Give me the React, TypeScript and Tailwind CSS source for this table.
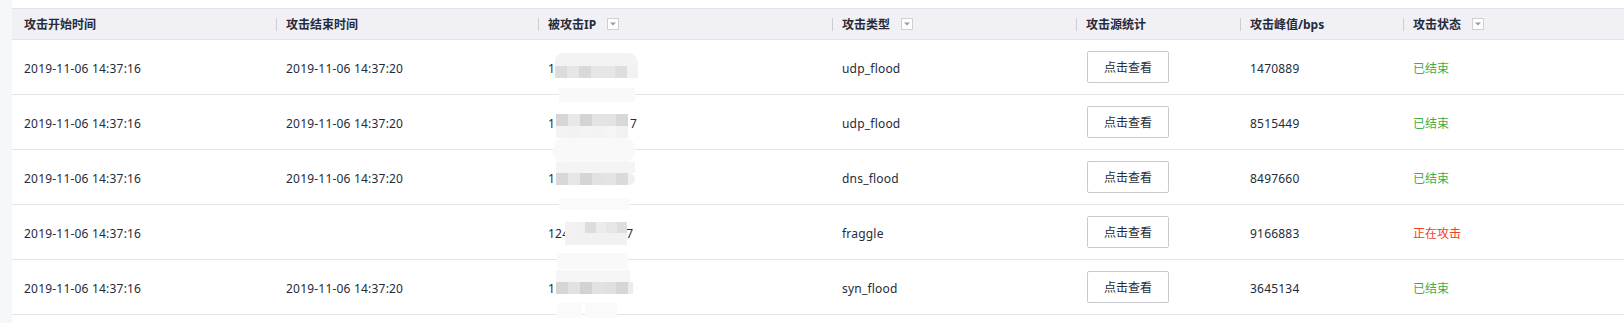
import React from "react";

type Rect = { x: number; y: number; w: number; h: number; c: string; r?: string };

const COLS = [264, 262, 294, 244, 164, 163, 221];
const IP_X = 538;

const HEAD = ["攻击开始时间", "攻击结束时间", "被攻击IP", "攻击类型", "攻击源统计", "攻击峰值/bps", "攻击状态"];
const HAS_FILTER = [false, false, true, true, false, false, true];

function cells(x0: number, y: number, h: number, colors: string[], w = 12): Rect[] {
  return colors.map((c, i) => ({ x: x0 + i * w, y, w, h, c }));
}

const ROWS = [
  {
    top: 40,
    start: "2019-11-06 14:37:16",
    end: "2019-11-06 14:37:20",
    ip: ["1", 0, ""] as [string, number, string],
    type: "udp_flood",
    peak: "1470889",
    done: true,
    mosaic: [
      { x: 555, y: 53, w: 83, h: 13, c: "#f3f3f3", r: "8px 10px 0 0" },
      ...cells(555, 66, 12, ["#dcdcdc", "#e6e6e6", "#d9d9d9", "#e6e6e6", "#e6e6e9", "#dedede"]),
      { x: 627, y: 66, w: 11, h: 12, c: "#f1f1f1" },
      { x: 559, y: 88, w: 76, h: 14, c: "#f9f9f9" },
    ] as Rect[],
  },
  {
    top: 95,
    start: "2019-11-06 14:37:16",
    end: "2019-11-06 14:37:20",
    ip: ["1", 75, "7"] as [string, number, string],
    type: "udp_flood",
    peak: "8515449",
    done: true,
    mosaic: [
      ...cells(556, 114, 12, ["#d6d6d6", "#e8e8e8", "#d4d4d4", "#e4e4e4", "#e3e3e5", "#d8d8d8"]),
      ...cells(556, 126, 12, ["#f3f3f3", "#f2f2f2", "#f4f4f4", "#f3f3f3", "#f5f5f5", "#f2f2f2"]),
      { x: 553, y: 138, w: 82, h: 24, c: "#f9f9f9", r: "10px" },
    ] as Rect[],
  },
  {
    top: 150,
    start: "2019-11-06 14:37:16",
    end: "2019-11-06 14:37:20",
    ip: ["1", 0, ""] as [string, number, string],
    type: "dns_flood",
    peak: "8497660",
    done: true,
    mosaic: [
      { x: 556, y: 162, w: 79, h: 11, c: "#f4f4f4" },
      ...cells(556, 173, 12, ["#d8d8d8", "#e6e6e6", "#d5d5d5", "#e2e2e2", "#e4e4e4", "#dadada"]),
      { x: 628, y: 173, w: 7, h: 12, c: "#f0f0f0", r: "0 6px 6px 0" },
      { x: 559, y: 198, w: 71, h: 12, c: "#fafafa" },
    ] as Rect[],
  },
  {
    top: 205,
    start: "2019-11-06 14:37:16",
    end: "",
    ip: ["124", 57, "7"] as [string, number, string],
    type: "fraggle",
    peak: "9166883",
    done: false,
    mosaic: [
      { x: 565, y: 222, w: 10, h: 11, c: "#f2f2f2" },
      ...cells(575, 222, 11, ["#f0f0f0", "#dddddd", "#ececec", "#e6e6e8", "#dedede"], 10.4),
      { x: 565, y: 233, w: 62, h: 12, c: "#f1f1f1" },
      { x: 557, y: 253, w: 71, h: 16, c: "#f9f9f9" },
    ] as Rect[],
  },
  {
    top: 260,
    start: "2019-11-06 14:37:16",
    end: "2019-11-06 14:37:20",
    ip: ["1", 0, ""] as [string, number, string],
    type: "syn_flood",
    peak: "3645134",
    done: true,
    mosaic: [
      { x: 556, y: 270, w: 74, h: 12, c: "#f6f6f6" },
      ...cells(556, 282, 12, ["#d6d6d6", "#e2e2e2", "#d2d2d2", "#e2e2e2", "#e0e0e0", "#d6d6d6"]),
      { x: 628, y: 282, w: 5, h: 12, c: "#ececec" },
      { x: 557, y: 303, w: 25, h: 15, c: "#fafafa" },
      { x: 585, y: 303, w: 32, h: 15, c: "#fafafa" },
    ] as Rect[],
  },
];

function FilterIcon() {
  return (
    <span className="ml-[11px] flex h-3 w-3 items-center justify-center border border-[#cfcfd4] bg-white">
      <svg width="6" height="4" viewBox="0 0 6 4">
        <path d="M0 0.5 L6 0.5 L3 3.5 Z" fill="#9a9aa3" />
      </svg>
    </span>
  );
}

export default function App() {
  return (
    <div className="flex h-[323px] w-[1624px] bg-white font-['Noto_Sans','Noto_Sans_CJK_SC',sans-serif] text-xs text-[#252b3a]">
      <div className="w-3 shrink-0 bg-[#f6f7f9]" />
      <div className="flex-1 pt-2">
        <div className="flex h-8 border-y border-[#e3e3e8] bg-[#f0f0f5] font-bold">
          {HEAD.map((h, i) => (
            <div key={h} className="flex shrink-0 items-center" style={{ width: COLS[i] }}>
              {i === 0 ? (
                <span className="pl-3 pt-0.5">{h}</span>
              ) : (
                <>
                  <span className="h-[13px] w-px bg-[#cdcdd2]" />
                  <span className="ml-[9px] pt-0.5">{h}</span>
                </>
              )}
              {HAS_FILTER[i] && <FilterIcon />}
            </div>
          ))}
        </div>
        {ROWS.map((r, ri) => (
          <div key={ri} className="flex h-[55px] border-b border-[#e4e4e8]">
            <div className="flex shrink-0 items-center pl-3 pt-1 tracking-[0.2px]" style={{ width: COLS[0] }}>
              {r.start}
            </div>
            <div className="flex shrink-0 items-center pl-2.5 pt-1 tracking-[0.2px]" style={{ width: COLS[1] }}>
              {r.end}
            </div>
            <div className="relative flex shrink-0 items-center pl-2.5 pt-1 tracking-[0.2px]" style={{ width: COLS[2] }}>
              <span>{r.ip[0]}</span>
              {r.ip[1] > 0 && <span className="inline-block" style={{ width: r.ip[1] }} />}
              <span>{r.ip[2]}</span>
              {r.mosaic.map((m, mi) => (
                <span
                  key={mi}
                  className="absolute"
                  style={{
                    left: m.x - IP_X,
                    top: m.y - r.top,
                    width: m.w,
                    height: m.h,
                    background: m.c,
                    borderRadius: m.r,
                  }}
                />
              ))}
            </div>
            <div className="flex shrink-0 items-center pl-2.5 pt-1 tracking-[0.2px]" style={{ width: COLS[3] }}>
              {r.type}
            </div>
            <div className="flex shrink-0 items-center pl-[11px]" style={{ width: COLS[4] }}>
              <button className="h-8 w-[82px] rounded-[2px] border border-[#c9c9ce] bg-white pt-0.5 text-xs text-[#252b3a]">
                点击查看
              </button>
            </div>
            <div className="flex shrink-0 items-center pl-2.5 pt-1 tracking-[0.2px]" style={{ width: COLS[5] }}>
              {r.peak}
            </div>
            <div className="flex shrink-0 items-center pl-2.5 pt-1" style={{ width: COLS[6] }}>
              {r.done ? (
                <span className="text-[#3fae49]">已结束</span>
              ) : (
                <span className="text-[#f5401f]">正在攻击</span>
              )}
            </div>
          </div>
        ))}
      </div>
    </div>
  );
}
